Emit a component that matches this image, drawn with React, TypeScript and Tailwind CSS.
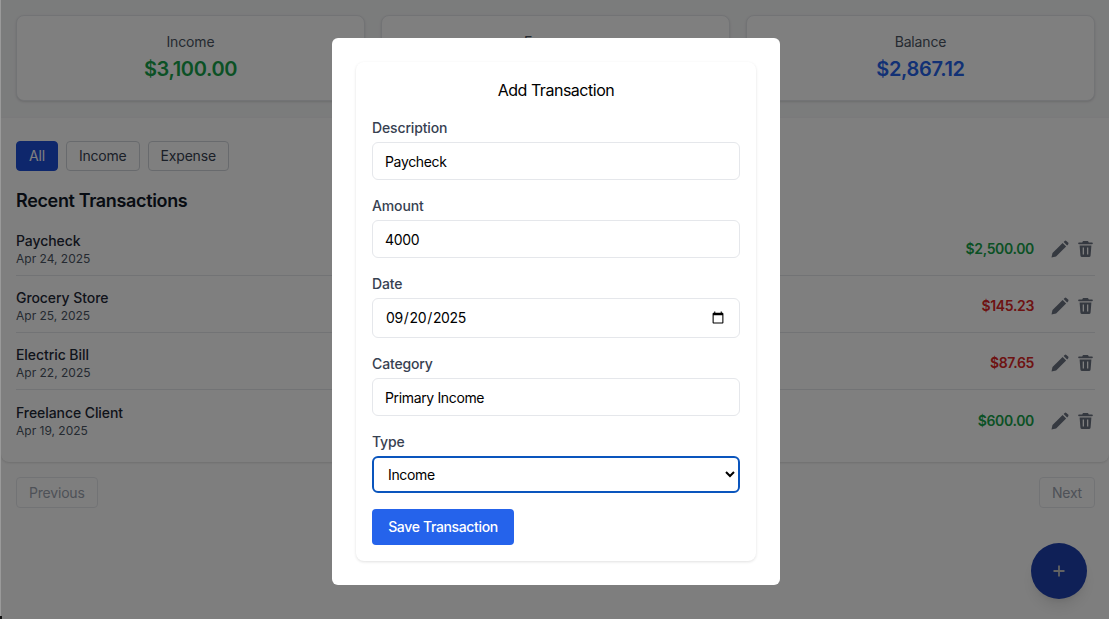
import React from "react";

const rows = [
  { name: "Paycheck", date: "Apr 24, 2025", amount: "$2,500.00", color: "text-[#16a34a]" },
  { name: "Grocery Store", date: "Apr 25, 2025", amount: "$145.23", color: "text-[#dc2626]" },
  { name: "Electric Bill", date: "Apr 22, 2025", amount: "$87.65", color: "text-[#dc2626]" },
  { name: "Freelance Client", date: "Apr 19, 2025", amount: "$600.00", color: "text-[#16a34a]" },
];

const cards = [
  { label: "Income", value: "$3,100.00", color: "text-[#16a34a]" },
  { label: "Expenses", value: "$232.88", color: "text-[#dc2626]" },
  { label: "Balance", value: "$2,867.12", color: "text-[#2563eb]" },
];

function Pencil() {
  return (
    <svg width="18" height="18" viewBox="0 0 18 18" fill="#6b7280">
      <path d="M0.500 17.500l1-4.600L11.600 2.900l3.500 3.500L5.100 16.500z" />
      <path d="M12.600 1.900l1-1a1.300 1.300 0 0 1 1.800 0l1.700 1.700a1.300 1.300 0 0 1 0 1.800l-1 1z" />
    </svg>
  );
}

function Trash() {
  return (
    <svg width="15" height="16" viewBox="0 0 15 16" fill="#6b7280">
      <path d="M5 0h5l.8 1.500h3.200a.8.800 0 0 1 0 1.700H1a.8.800 0 0 1 0-1.700h3.200z" />
      <path
        fillRule="evenodd"
        d="M1.600 4.400h11.800l-.8 10a1.700 1.700 0 0 1-1.700 1.600H4.100a1.700 1.700 0 0 1-1.700-1.600zM4.700 6.500v7h1.300v-7zm4.300 0v7h1.300v-7z"
      />
    </svg>
  );
}

function Field({ label, children }: { label: string; children: React.ReactNode }) {
  return (
    <div className="flex flex-col">
      <label className="text-sm leading-5 font-medium text-[#374151] mb-1 tracking-[-0.01em]">{label}</label>
      {children}
    </div>
  );
}

const inputCls =
  "w-full h-[38px] px-3 border border-[#e5e7eb] rounded-md bg-white text-sm text-black outline-none";

export default function App() {
  return (
    <div
      className="relative w-[1109px] h-[619px] overflow-hidden bg-[#fdfdfd] text-[#111827] tracking-[-0.022em]"
      style={{ fontFamily: "Inter, 'Noto Sans', sans-serif" }}
    >
      <section className="h-[118px] pt-[15px] pl-4 pr-[14px] bg-[#f7f8f9] grid grid-cols-3 gap-4 content-start">
        {cards.map((c) => (
          <div
            key={c.label}
            className="h-[86px] bg-white border border-[#e5e7eb] rounded-lg shadow-sm flex flex-col items-center pt-4"
          >
            <span className="text-sm leading-5 text-[#4b5563] tracking-[-0.01em]">{c.label}</span>
            <span className={`text-xl leading-7 font-semibold mt-[3px] ${c.color}`}>{c.value}</span>
          </div>
        ))}
      </section>

      <section className="h-[344px] ml-px bg-white rounded-b-lg shadow-sm pl-[15px] pr-[14px] pt-[23px]">
        <div className="flex gap-2 tracking-[-0.012em]">
          <button className="h-[30px] px-3 text-sm rounded bg-[#1d4ed8] text-white border border-[#1d4ed8]">All</button>
          <button className="h-[30px] px-3 text-sm rounded border border-[#d1d5db] text-[#374151]">Income</button>
          <button className="h-[30px] px-3 text-sm rounded border border-[#d1d5db] text-[#374151]">Expense</button>
        </div>
        <h2 className="text-lg leading-7 font-semibold text-[#111827] mt-4">Recent Transactions</h2>
        <div className="mt-1">
          {rows.map((r, i) => (
            <div
              key={r.name}
              className={`h-[57px] flex items-center justify-between ${i < 3 ? "border-b border-[#e5e7eb]" : ""}`}
            >
              <div className="flex flex-col pt-[4px]">
                <span className="text-sm leading-5 font-medium text-[#1f2937] tracking-[-0.005em]">{r.name}</span>
                <span className="text-xs leading-4 text-[#4b5563] tracking-normal">{r.date}</span>
              </div>
              <div className="flex items-center pr-[2px]">
                <span className={`text-sm font-semibold pt-[4px] ${r.color}`}>{r.amount}</span>
                <span className="ml-[17px] flex items-center gap-[9px] pt-[4px]">
                  <Pencil />
                  <Trash />
                </span>
              </div>
            </div>
          ))}
        </div>
      </section>

      <div className="flex justify-between pl-4 pr-[14px] mt-[15px] tracking-[-0.012em]">
        <button className="h-[31px] px-3 text-sm rounded border border-[#e5e7eb] text-[#9ca3af]">Previous</button>
        <button className="h-[31px] px-3 text-sm rounded border border-[#e5e7eb] text-[#9ca3af]">Next</button>
      </div>

      <button className="absolute left-[1031px] top-[543px] w-14 h-14 rounded-full bg-[#1e40af] text-white shadow-lg flex items-center justify-center">
        <svg width="16" height="16" viewBox="0 0 16 16" fill="none" stroke="#c4c4c4" strokeWidth="1.800">
          <path d="M8 2.500v11M2.500 8h11" />
        </svg>
      </button>

      <div className="absolute inset-0 bg-black/50" />
      <div className="absolute left-0 top-0 bottom-0 w-px bg-[#9a9a9a]" />
      <div className="absolute left-0 bottom-0 w-[2px] h-[3px] bg-[#111111]" />

      <div className="absolute left-[332px] top-[38px] w-[448px] h-[547px] bg-white rounded-md p-6">
        <div className="h-[499px] rounded-lg bg-white shadow-[0_1px_3px_rgba(0,0,0,0.12)] px-4 pt-4">
          <h3 className="text-base leading-6 font-normal text-black text-center mb-4 tracking-[-0.03em]">Add Transaction</h3>
          <div className="flex flex-col gap-4">
            <Field label="Description">
              <input className={inputCls} defaultValue="Paycheck" />
            </Field>
            <Field label="Amount">
              <input className={inputCls} defaultValue="4000" />
            </Field>
            <Field label="Date">
              <input type="date" className={`${inputCls} h-[40px]`} defaultValue="2025-09-20" />
            </Field>
            <Field label="Category">
              <input className={inputCls} defaultValue="Primary Income" />
            </Field>
            <Field label="Type">
              <select
                defaultValue="Income"
                className="w-full h-[37px] pl-[10px] pr-1 border-2 border-[#0a55bd] rounded-md bg-white text-sm text-black outline-none appearance-auto"
              >
                <option>Income</option>
                <option>Expense</option>
              </select>
            </Field>
          </div>
          <button className="mt-4 h-9 w-[142px] rounded bg-[#2563eb] text-sm font-medium text-white">Save Transaction</button>
        </div>
      </div>
    </div>
  );
}
